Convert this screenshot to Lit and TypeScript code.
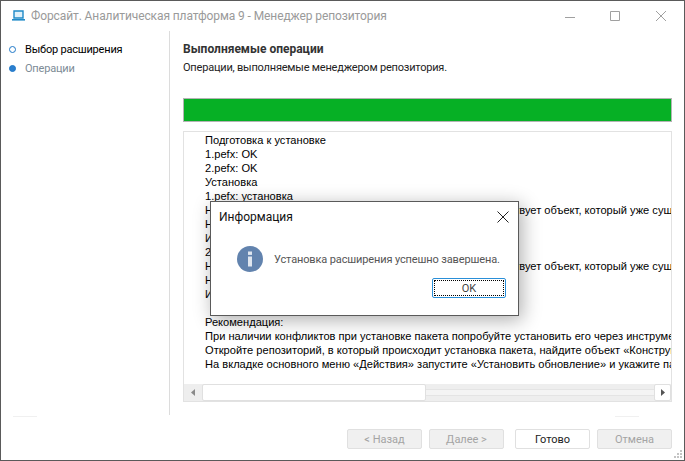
import { LitElement, html, css } from "lit";
import { customElement } from "lit/decorators.js";

const lines = [
  "Подготовка к установке",
  "1.pefx: OK",
  "2.pefx: OK",
  "Установка",
  "1.pefx: установка",
  "Невозможно установить объект: в репозитории уже присутствует объект, который уже существует",
  "Невозможно установить объект",
  "Источник конфликта",
  "2.pefx: установка",
  "Невозможно установить объект: в репозитории уже присутствует объект, который уже существует",
  "Невозможно установить объект",
  "Источник конфликта",
  "\u00a0",
  "Рекомендация:",
  "При наличии конфликтов при установке пакета попробуйте установить его через инструмент обновления",
  "Откройте репозиторий, в который происходит установка пакета, найдите объект «Конструктор обновлений»",
  "На вкладке основного меню «Действия» запустите «Установить обновление» и укажите папку с пакетом",
];

@customElement("app-root")
export class AppRoot extends LitElement {
  static styles = css`
    :host {
      display: block;
      width: 685px;
      height: 461px;
      font-family: Roboto, "Liberation Sans", sans-serif;
      font-size: 11px;
      letter-spacing: -0.2px;
      color: #000;
      overflow: hidden;
    }
    .window {
      position: relative;
      box-sizing: border-box;
      width: 685px;
      height: 461px;
      border: 1px solid #5a5a5a;
      background: #fff;
      display: flex;
      flex-direction: column;
    }
    .titlebar {
      height: 30px;
      flex: none;
      display: flex;
      align-items: center;
      padding-left: 11px;
      color: #9a9a9a;
    }
    .titlebar .app { margin-right: 6px; flex: none; }
    .titlebar .title { flex: 1; font-size: 12px; letter-spacing: -0.1px; white-space: nowrap; }
    .caps { display: flex; align-items: center; flex: none; margin-top: -1px; }
    .caps svg { display: block; }
    .main { flex: none; height: 384px; display: flex; }
    .side {
      width: 169px;
      flex: none;
      box-sizing: border-box;
      border-right: 1px solid #dcdcdc;
      padding-top: 9px;
    }
    .step {
      height: 19px;
      display: flex;
      align-items: center;
      padding-left: 8px;
      gap: 9px;
    }
    .dot {
      width: 7px;
      height: 7px;
      border-radius: 50%;
      box-sizing: border-box;
      border: 1.2px solid #1f78c8;
      flex: none;
    }
    .step.cur .dot { background: #2b7fcf; }
    .step.cur { color: #7d8b96; }
    .content { flex: 1; min-width: 0; padding: 11px 12px 0 13px; display: flex; flex-direction: column; }
    h1 { margin: 0; font-size: 12px; letter-spacing: 0; line-height: 15px; font-weight: bold; color: #333; }
    .sub { line-height: 15px; margin-top: 3px; color: #222; }
    .progress {
      margin-top: 23px;
      height: 24px;
      box-sizing: border-box;
      border: 1px solid #b4b4b4;
      background: #06b025;
      flex: none;
    }
    .listbox {
      margin-top: 9px;
      height: 271px;
      box-sizing: border-box;
      border: 1px solid #e2e2e2;
      display: flex;
      flex-direction: column;
    }
    .text {
      flex: 1;
      min-height: 0;
      overflow: hidden;
      padding: 1px 0 0 21px;
      line-height: 14px;
      white-space: nowrap;
      font-family: "Liberation Sans", Arial, sans-serif;
      font-size: 11.1px;
      letter-spacing: 0;
    }
    .text div { height: 14px; }
    .hbar {
      flex: none;
      height: 17px;
      background: #eeeeee;
      display: flex;
      align-items: stretch;
    }
    .arrow {
      width: 17px;
      flex: none;
      display: flex;
      align-items: center;
      justify-content: center;
    }
    .arrow.right { background: #fff; border: 1px solid #e0e0e0; border-radius: 2px; box-sizing: border-box; }
    .thumb {
      width: 224px;
      flex: none;
      margin-left: 1px;
      background: #fff;
      border: 1px solid #e0e0e0;
      border-radius: 2px;
      box-sizing: border-box;
    }
    .track { flex: 1; margin: 5px 0; background: #f4f4f4; border-top: 1px solid #e4e4e4; border-bottom: 1px solid #e4e4e4; }
    .footer {
      flex: 1;
      display: flex;
      justify-content: flex-end;
      align-items: flex-start;
      padding: 14px 12px 0 0;
    }
    .btn {
      width: 75px;
      height: 20px;
      box-sizing: border-box;
      border: 1px solid #e0e0e0;
      border-radius: 2px;
      background: #fff;
      display: flex;
      align-items: center;
      justify-content: center;
      color: #222;
      letter-spacing: 0;
    }
    .btn.off { background: #f0f0f0; color: #a4a4a4; }
    .b1 { margin-right: 7px; }
    .b2 { margin-right: 11px; }
    .b3 { margin-right: 7px; }
    .faint { position: absolute; height: 1px; background: #f0f0f0; width: 24px; top: 415px; }
    .grip { position: absolute; right: 1px; bottom: 1px; }
    .dialog {
      position: absolute;
      left: 209px;
      top: 200px;
      width: 309px;
      height: 115px;
      box-sizing: border-box;
      border: 1px solid #5a5a5a;
      background: #fff;
      box-shadow: 3px 4px 18px rgba(0, 0, 0, 0.32);
      display: flex;
      flex-direction: column;
    }
    .dhead {
      height: 29px;
      flex: none;
      display: flex;
      align-items: center;
      justify-content: space-between;
      padding: 0 8px 0 8px;
      font-size: 12px;
      letter-spacing: 0;
      color: #111;
    }
    .dbody {
      display: flex;
      align-items: center;
      gap: 11px;
      padding: 15px 0 0 26px;
      color: #555;
      white-space: nowrap;
      letter-spacing: -0.13px;
    }
    .dbody svg { flex: none; }
    .dfoot { display: flex; justify-content: flex-end; padding: 6px 12px 0 0; }
    .ok {
      width: 74px;
      height: 20px;
      box-sizing: border-box;
      border: 1px solid #2a8fd8;
      border-radius: 2px;
      padding: 1px;
      display: flex;
    }
    .ok span {
      flex: 1;
      border: 1px dotted #000;
      display: flex;
      align-items: center;
      justify-content: center;
      color: #444;
      letter-spacing: 0;
    }
  `;

  render() {
    return html`
      <div class="window">
        <div class="titlebar">
          <svg class="app" width="13" height="12" viewBox="0 0 13 12">
            <path d="M2 1h9v7H2z" fill="#dff1fb" stroke="#1f8ac8" stroke-width="1.4"/>
            <path d="M0 9h13v1.6H0z" fill="#1f8ac8"/>
          </svg>
          <div class="title">Форсайт. Аналитическая платформа 9 - Менеджер репозитория</div>
          <div class="caps">
            <svg width="122" height="14" viewBox="0 0 122 14">
              <path d="M3 8.5h10" stroke="#a0a0a0" fill="none"/>
              <path d="M48.5 2.5h9v9h-9z" stroke="#a0a0a0" fill="none"/>
              <path d="M94 2l10 10M104 2l-10 10" stroke="#a0a0a0" fill="none"/>
            </svg>
          </div>
        </div>
        <div class="main">
          <div class="side">
            <div class="step"><span class="dot"></span><span>Выбор расширения</span></div>
            <div class="step cur"><span class="dot"></span><span>Операции</span></div>
          </div>
          <div class="content">
            <h1>Выполняемые операции</h1>
            <div class="sub">Операции, выполняемые менеджером репозитория.</div>
            <div class="progress"></div>
            <div class="listbox">
              <div class="text">${lines.map((l) => html`<div>${l}</div>`)}</div>
              <div class="hbar">
                <div class="arrow">
                  <svg width="4" height="7" viewBox="0 0 4 7"><path d="M4 0v7L0 3.5z" fill="#8a8a8a"/></svg>
                </div>
                <div class="thumb"></div>
                <div class="track"></div>
                <div class="arrow right">
                  <svg width="4" height="7" viewBox="0 0 4 7"><path d="M0 0v7l4-3.5z" fill="#555"/></svg>
                </div>
              </div>
            </div>
          </div>
        </div>
        <div class="footer">
          <div class="btn off b1">&lt; Назад</div>
          <div class="btn off b2">Далее &gt;</div>
          <div class="btn b3">Готово</div>
          <div class="btn off">Отмена</div>
        </div>
        <div class="faint" style="left:12px"></div>
        <div class="faint" style="left:614px"></div>
        <svg class="grip" width="11" height="11" viewBox="0 0 11 11" fill="#c4c4c4">
          <rect x="8" y="8" width="2" height="2"/><rect x="5" y="8" width="2" height="2"/><rect x="2" y="8" width="2" height="2"/>
          <rect x="8" y="5" width="2" height="2"/><rect x="5" y="5" width="2" height="2"/><rect x="8" y="2" width="2" height="2"/>
        </svg>
        <div class="dialog">
          <div class="dhead">
            <span>Информация</span>
            <svg width="14" height="14" viewBox="0 0 14 14"><path d="M1.5 1.5l11 11M12.5 1.5l-11 11" stroke="#222" fill="none"/></svg>
          </div>
          <div class="dbody">
            <svg width="26" height="26" viewBox="0 0 26 26">
              <circle cx="13" cy="13" r="13" fill="#6283ae"/>
              <rect x="11" y="5.5" width="4" height="3.4" fill="#dfe6ef"/>
              <rect x="11" y="10.5" width="4" height="10" fill="#dfe6ef"/>
            </svg>
            <span>Установка расширения успешно завершена.</span>
          </div>
          <div class="dfoot"><div class="ok"><span>OK</span></div></div>
        </div>
      </div>
    `;
  }
}
